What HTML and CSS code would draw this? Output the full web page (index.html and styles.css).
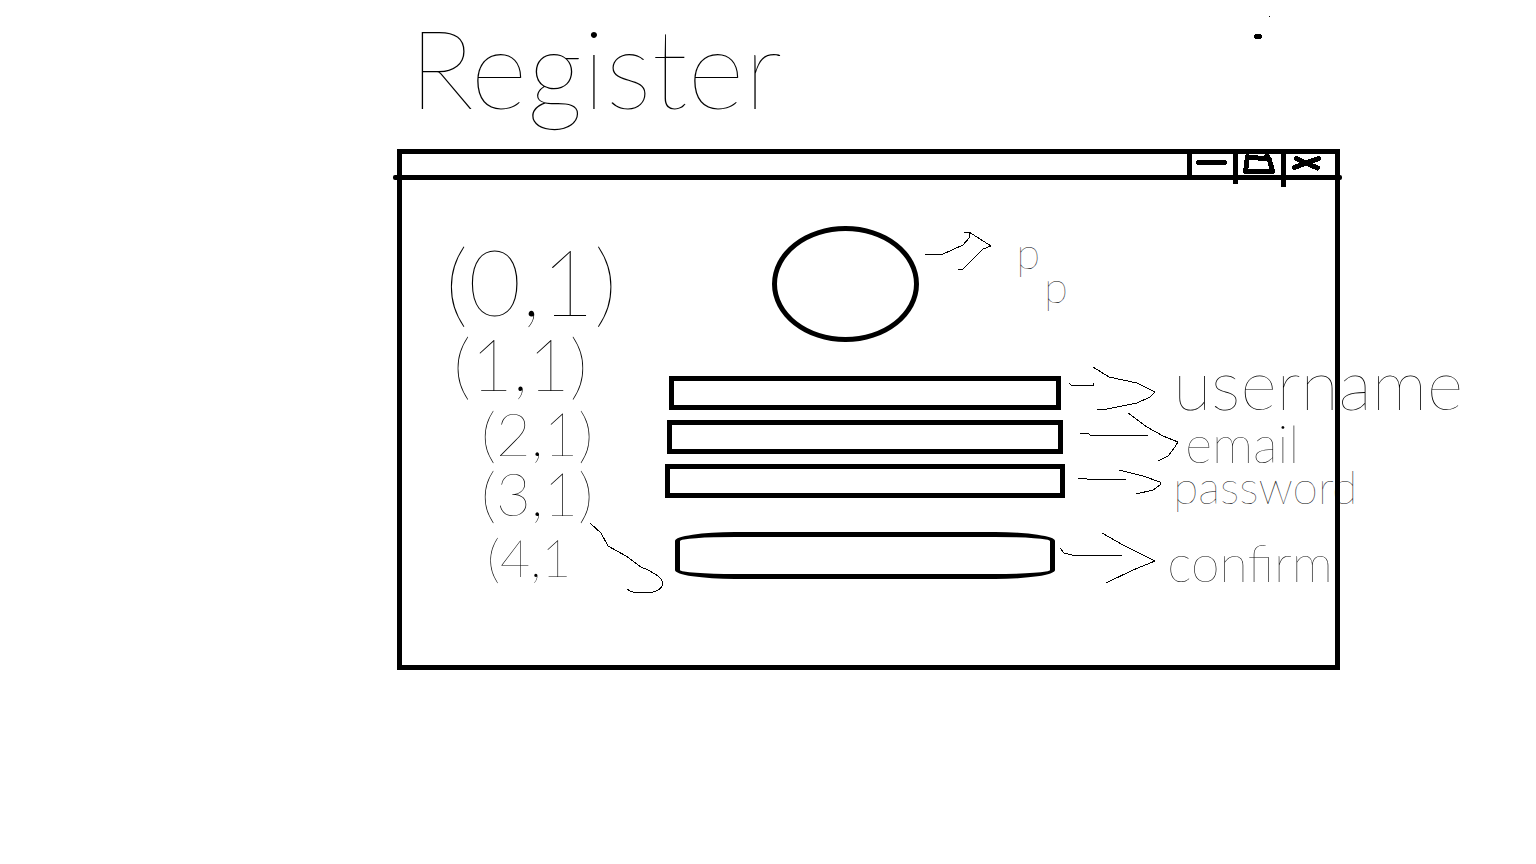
FILE: index.html
```html
<!DOCTYPE html>
<html lang="en">
<head>
<meta charset="utf-8">
<title>Register</title>
<link rel="stylesheet" href="styles.css">
</head>
<body>
<div class="page">
  <header class="heading">
    <h1 class="title">Register</h1>
    <svg class="specks" viewBox="0 0 20 30" aria-hidden="true"><path class="bold" d="M6.5 23.500H9.500"/><path d="M19 3h1"/></svg>
  </header>
  <main class="window">
    <div class="titlebar">
      <button class="control minimize" type="button" aria-label="Minimize"><svg viewBox="0 0 41 21"><path class="bold" d="M6.500 8.500H32.500"/></svg></button>
      <button class="control maximize" type="button" aria-label="Maximize"><svg viewBox="0 0 43 21"><path class="bold" d="M9.500 2.500L7.500 17.500H34.500L31.500 6L29 1.500M9.500 3.500L31 4.500"/></svg></button>
      <button class="control close" type="button" aria-label="Close"><svg viewBox="0 0 49 21"><path class="bold" d="M10.500 4.500L20 9L31.500 14M32.500 4.500L20 9L8.500 13.500"/></svg></button>
    </div>
    <div class="rule"></div>
    <div class="content">
      <ul class="cells">
        <li class="cell first">(0,1)</li>
        <li class="cell second">(1,1)</li>
        <li class="cell third">(2,1)</li>
        <li class="cell fourth">(3,1)</li>
        <li class="cell fifth">(4,1
          <svg class="swoosh" viewBox="590 522 76 74" aria-hidden="true"><path d="M591 524L602 534L609 547L627 557L642 568Q664 577 664 585Q661 594 645 594Q632 594 628 590"/></svg>
        </li>
      </ul>
      <form class="form">
        <div class="avatar" role="img" aria-label="Profile picture"></div>
        <div class="fields">
          <input class="field username" id="username" type="text">
          <input class="field email" id="email" type="email">
          <input class="field password" id="password" type="password">
        </div>
        <button class="submit" type="button" aria-labelledby="confirm"></button>
      </form>
      <div class="notes">
        <div class="note picture">
          <svg viewBox="925 226 91 116" aria-hidden="true"><path d="M925 254H943L963 245L970 237L969 233M964 232H969L980 239L991 246L983 249L972 260L963 269H958"/></svg>
          <span class="letter">p</span><span class="letter low">p</span>
        </div>
        <div class="group">
          <div class="note">
            <svg viewBox="1065 376 108 34" aria-hidden="true"><path d="M1069 383L1071 385H1093V383M1093 367L1109 377L1137 383L1155 392L1150 397L1137 403L1107 409L1097 410"/></svg>
            <label class="label large" for="username">username</label>
          </div>
          <div class="note">
            <svg class="wide" viewBox="1065 420 120 34" aria-hidden="true"><path d="M1080 433H1088L1090 435H1148M1128 413L1147 427L1163 436L1178 442L1175 447L1168 456L1158 461"/></svg>
            <label class="label medium" for="email">email</label>
          </div>
          <div class="note">
            <svg viewBox="1065 464 108 34" aria-hidden="true"><path d="M1078 478L1087 479H1126M1119 470L1143 476L1160 482L1160 485L1153 490L1136 494"/></svg>
            <label class="label small" for="password">password</label>
          </div>
        </div>
        <div class="note action">
          <svg viewBox="1065 532 102 47" aria-hidden="true"><path d="M1060 548L1064 553L1072 555H1122M1102 533L1123 545L1155 561L1133 570L1106 583"/></svg>
          <span class="label medium" id="confirm">confirm</span>
        </div>
      </div>
    </div>
  </main>
</div>
</body>
</html>
```
FILE: styles.css
```css
* { box-sizing: border-box; }

body {
  margin: 0;
  background: #fff;
  color: #000;
  font-family: Lato, "Open Sans", sans-serif;
  font-weight: 100;
}

.page {
  display: grid;
  grid-template-columns: 397fr 943fr 196fr;
}

.heading, .window { grid-column: 2; min-width: 0; }

.heading {
  display: flex;
  justify-content: space-between;
  align-items: flex-start;
  min-height: 149px;
  padding: 0 70px 0 12px;
}

.title {
  margin: 0;
  font-size: 110px;
  font-weight: 100;
  line-height: 132px;
}

svg {
  display: block;
  flex: none;
  overflow: visible;
  fill: none;
  stroke: #000;
  stroke-width: 1px;
  shape-rendering: crispEdges;
}

.bold {
  stroke-width: 5px;
  stroke-linecap: round;
  stroke-linejoin: round;
}

.specks { width: 20px; height: 30px; margin-top: 13px; }

.window { border: 5px solid #000; }

.titlebar {
  display: flex;
  justify-content: flex-end;
  align-items: flex-start;
  height: 21px;
}

.control {
  display: flex;
  align-items: flex-start;
  padding: 0;
  border: 0;
  border-left: 5px solid #000;
  background: none;
}

.control svg { width: 100%; height: 21px; }
.minimize { width: 46px; height: 21px; }
.maximize { width: 48px; height: 30px; }
.close { width: 54px; height: 33px; }

.rule {
  height: 5px;
  margin: 0 -7px 0 -9px;
  border-radius: 2px;
  background: #000;
}

.content {
  display: grid;
  grid-template-columns: 263fr 400fr 270fr;
  padding-bottom: 86px;
}

.cells {
  margin: 0;
  padding: 63px 0 0 43px;
  list-style: none;
}

.cell { display: flex; height: 64px; line-height: 64px; white-space: nowrap; }
.first { height: 80px; font-size: 92px; line-height: 76px; }
.second { margin: 10px 0 0 8px; font-size: 72px; line-height: 60px; }
.third { margin: 4px 0 0 36px; font-size: 60px; }
.fourth { height: 56px; margin-left: 36px; font-size: 60px; line-height: 56px; }
.fifth { height: 48px; margin-left: 42px; font-size: 52px; line-height: 72px; }
.swoosh { width: 76px; height: 74px; margin-left: 18px; }

.form, .notes {
  display: flex;
  flex-direction: column;
  gap: 34px;
  min-width: 0;
  padding-top: 46px;
}

.form { align-items: center; }

.avatar {
  width: 147px;
  height: 116px;
  margin-right: 40px;
  border: 5px solid #000;
  border-radius: 50%;
}

.fields {
  display: flex;
  flex-direction: column;
  align-items: center;
  gap: 10px;
  width: 100%;
}

.field {
  height: 34px;
  padding: 0 8px;
  border: 5px solid #000;
  border-radius: 0;
  background: none;
  font: 16px Lato, sans-serif;
}

.username { width: 98%; }
.email { width: 99%; }
.password { width: 100%; }

.submit {
  width: 95%;
  height: 47px;
  border: 5px solid #000;
  border-radius: 60px / 9px;
  background: none;
}

.group { display: flex; flex-direction: column; gap: 10px; }

.note {
  display: flex;
  align-items: center;
  height: 34px;
  white-space: nowrap;
}

.note svg { width: 108px; height: 34px; }
.note .wide { width: 120px; }

.picture { align-items: flex-start; height: 116px; margin-left: -140px; }
.picture svg { width: 91px; height: 116px; }
.letter { font-size: 44px; line-height: 52px; }
.low { padding-top: 34px; margin-left: 4px; }

.action { height: 47px; }
.action svg { width: 102px; height: 47px; }

.label { padding-top: 12px; line-height: 1; }
.large { padding: 0 0 20px; font-size: 70px; }
.medium { font-size: 52px; }
.small { font-size: 46px; }
```
